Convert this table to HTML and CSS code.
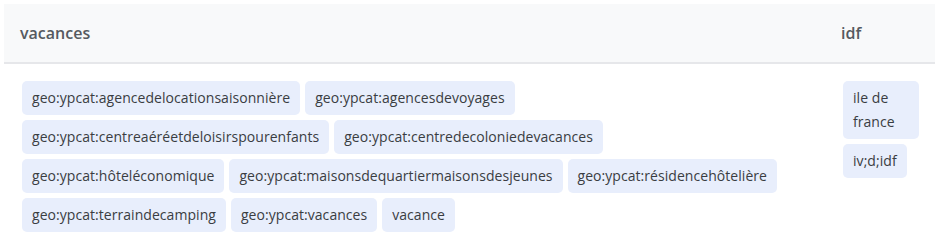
FILE: index.html
```html
<!DOCTYPE html>
<html>
<head>
<meta charset="utf-8">
<link rel="stylesheet" href="styles.css">
</head>
<body>
<div class="table">
  <div class="head">
    <div class="th">vacances</div>
    <div class="th">idf</div>
  </div>
  <div class="row">
    <div class="td td-main">
      <div class="tags">
        <span class="tag">geo:ypcat:agencedelocationsaisonnière</span>
        <span class="tag">geo:ypcat:agencesdevoyages</span>
        <span class="tag">geo:ypcat:centreaéréetdeloisirspourenfants</span>
        <span class="tag">geo:ypcat:centredecoloniedevacances</span>
        <span class="tag">geo:ypcat:hôteléconomique</span>
        <span class="tag">geo:ypcat:maisonsdequartiermaisonsdesjeunes</span>
        <span class="tag">geo:ypcat:résidencehôtelière</span>
        <span class="tag">geo:ypcat:terraindecamping</span>
        <span class="tag">geo:ypcat:vacances</span>
        <span class="tag">vacance</span>
      </div>
    </div>
    <div class="td">
      <div class="tags">
        <span class="tag">ile de france</span>
        <span class="tag">iv;d;idf</span>
      </div>
    </div>
  </div>
</div>
</body>
</html>
```
FILE: styles.css
```css
html, body {
  margin: 0;
  padding: 0;
  background: #ffffff;
}
body {
  padding: 4px;
  font-family: "Open Sans", "Noto Sans", sans-serif;
  color: #3a3a3a;
}
.table {
  width: 931px;
}
.head, .row {
  display: grid;
  grid-template-columns: 1fr 110px;
}
.head {
  background: #f8f9fa;
  border-bottom: 2px solid #e6e7ea;
  height: 58px;
  align-items: center;
}
.th {
  padding-left: 16px;
  font-size: 16px;
  font-weight: 600;
  color: #555a60;
}
.td {
  padding: 17px 16px 0 18px;
}
.td-main {
  padding-right: 30px;
}
.tags {
  display: flex;
  flex-wrap: wrap;
  gap: 5px;
  align-items: flex-start;
}
.tag {
  background: #e8eefc;
  border-radius: 5px;
  padding: 5px 10px;
  font-size: 14px;
  line-height: 24px;
  letter-spacing: 0.05px;
  color: #3a3d42;
}
```
